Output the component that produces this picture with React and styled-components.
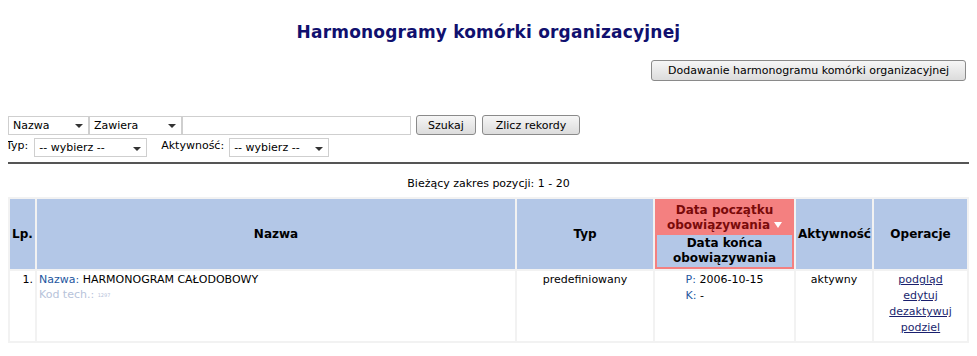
import React from "react";
import styled, { createGlobalStyle } from "styled-components";

const GlobalStyle = createGlobalStyle`
  body {
    margin: 8px;
    background: #fff;
    font-family: Tahoma, "DejaVu Sans", Verdana, sans-serif;
    font-size: 11px;
    color: #000;
  }
`;

const Title = styled.h1`
  margin: 14px 0 0;
  text-align: center;
  font-size: 17px;
  font-weight: bold;
  color: #10106e;
  letter-spacing: 0.2px;
`;

const TopBar = styled.div`
  display: flex;
  justify-content: flex-end;
  margin-top: 18px;
  padding-right: 3px;
`;

const Button = styled.button`
  font-family: inherit;
  font-size: 11px;
  color: #000;
  height: ${(p) => p.$h || 20}px;
  padding: 0 ${(p) => p.$px || 8}px;
  margin-left: ${(p) => p.$ml || 0}px;
  border: 1px solid #8a8a8a;
  border-radius: 3px;
  background: linear-gradient(#f6f6f6, #dcdcdc);
  cursor: pointer;
`;

const Filters = styled.div`
  margin-top: 34px;
  display: flex;
  flex-direction: column;
  gap: 3px;
`;

const Row = styled.div`
  display: flex;
  align-items: center;
`;

const SelectBox = styled.div`
  box-sizing: border-box;
  width: ${(p) => p.$w}px;
  height: 19px;
  border: 1px solid #cfcfcf;
  background: #fff;
  display: flex;
  align-items: center;
  justify-content: space-between;
  padding: 0 5px 0 4px;
  margin-left: ${(p) => p.$ml || 0}px;
  &::after {
    content: "";
    border-left: 4px solid transparent;
    border-right: 4px solid transparent;
    border-top: 4px solid #333;
    margin-top: 2px;
  }
`;

const TextInput = styled.input`
  box-sizing: border-box;
  width: 229px;
  height: 19px;
  border: 1px solid #cfcfcf;
  margin: 0 5px 0 0;
  padding: 0;
`;

const Label = styled.span`
  margin-left: ${(p) => p.$ml || 0}px;
  position: relative;
  top: -2px;
`;

const Rule = styled.hr`
  margin: 5px 0 0;
  border: none;
  border-top: 2px solid #555;
`;

const Range = styled.div`
  text-align: center;
  margin-top: 13px;
  margin-bottom: 7px;
`;

const Table = styled.table`
  width: 100%;
  table-layout: fixed;
  border-collapse: separate;
  border-spacing: 2px;
  background: #f2f2f2;
  font-size: 11px;
`;

const Th = styled.th`
  box-sizing: border-box;
  background: ${(p) => (p.$sorted ? "#f48080" : "#b3c7e7")};
  height: 70px;
  padding: ${(p) => (p.$sorted ? "2px" : "0 2px")};
  font-size: 12px;
  font-weight: bold;
  color: #000;
  text-align: center;
  vertical-align: middle;
`;

const SortedTop = styled.div`
  color: #7a0a0a;
  line-height: 15px;
  padding: 1px 0 2px;
`;

const SortedBottom = styled.div`
  background: #b3c7e7;
  line-height: 15px;
  padding: 1px 0;
`;

const Arrow = styled.span`
  display: inline-block;
  margin-left: 4px;
  border-left: 4px solid transparent;
  border-right: 4px solid transparent;
  border-top: 6px solid #fff;
  vertical-align: 1px;
`;

const Td = styled.td`
  box-sizing: border-box;
  background: #fff;
  height: 70px;
  vertical-align: top;
  text-align: ${(p) => p.$align || "center"};
  padding: 1px 2px 0;
  line-height: 16px;
`;

const Key = styled.span`
  color: #2456a0;
`;

const Muted = styled.div`
  color: #b7c3da;
  line-height: 14px;
`;

const Tiny = styled.span`
  font-size: 5px;
  vertical-align: 1px;
`;

const DateBlock = styled.div`
  display: inline-block;
  text-align: left;
`;

const Link = styled.a`
  display: block;
  color: #1a1f6e;
  text-decoration: underline;
`;

export default function App() {
  return (
    <>
      <GlobalStyle />
      <Title>Harmonogramy komórki organizacyjnej</Title>
      <TopBar>
        <Button $h={21} $px={16}>Dodawanie harmonogramu komórki organizacyjnej</Button>
      </TopBar>
      <Filters>
        <Row>
          <SelectBox $w={81}>Nazwa</SelectBox>
          <SelectBox $w={93}>Zawiera</SelectBox>
          <TextInput />
          <Button $px={11}>Szukaj</Button>
          <Button $px={13} $ml={6}>Zlicz rekordy</Button>
        </Row>
        <Row>
          <Label $ml={-2}>Typ:</Label>
          <SelectBox $w={113} $ml={6}>-- wybierz --</SelectBox>
          <Label $ml={14}>Aktywność:</Label>
          <SelectBox $w={100} $ml={5}>-- wybierz --</SelectBox>
        </Row>
      </Filters>
      <Rule />
      <Range>Bieżący zakres pozycji: 1 - 20</Range>
      <Table>
        <colgroup>
          <col style={{ width: 25 }} />
          <col />
          <col style={{ width: 136 }} />
          <col style={{ width: 139 }} />
          <col style={{ width: 76 }} />
          <col style={{ width: 93 }} />
        </colgroup>
        <thead>
          <tr>
            <Th>Lp.</Th>
            <Th>Nazwa</Th>
            <Th>Typ</Th>
            <Th $sorted>
              <SortedTop>
                Data początku
                <br />
                obowiązywania
                <Arrow />
              </SortedTop>
              <SortedBottom>
                Data końca
                <br />
                obowiązywania
              </SortedBottom>
            </Th>
            <Th>Aktywność</Th>
            <Th>Operacje</Th>
          </tr>
        </thead>
        <tbody>
          <tr>
            <Td $align="right">1.</Td>
            <Td $align="left">
              <div>
                <Key>Nazwa:</Key> HARMONOGRAM CAŁODOBOWY
              </div>
              <Muted>
                Kod tech.: <Tiny>1297</Tiny>
              </Muted>
            </Td>
            <Td>predefiniowany</Td>
            <Td>
              <DateBlock>
                <div>
                  <Key>P:</Key> 2006-10-15
                </div>
                <div>
                  <Key>K:</Key> -
                </div>
              </DateBlock>
            </Td>
            <Td>aktywny</Td>
            <Td>
              <Link href="#">podgląd</Link>
              <Link href="#">edytuj</Link>
              <Link href="#">dezaktywuj</Link>
              <Link href="#">podziel</Link>
            </Td>
          </tr>
        </tbody>
      </Table>
    </>
  );
}
